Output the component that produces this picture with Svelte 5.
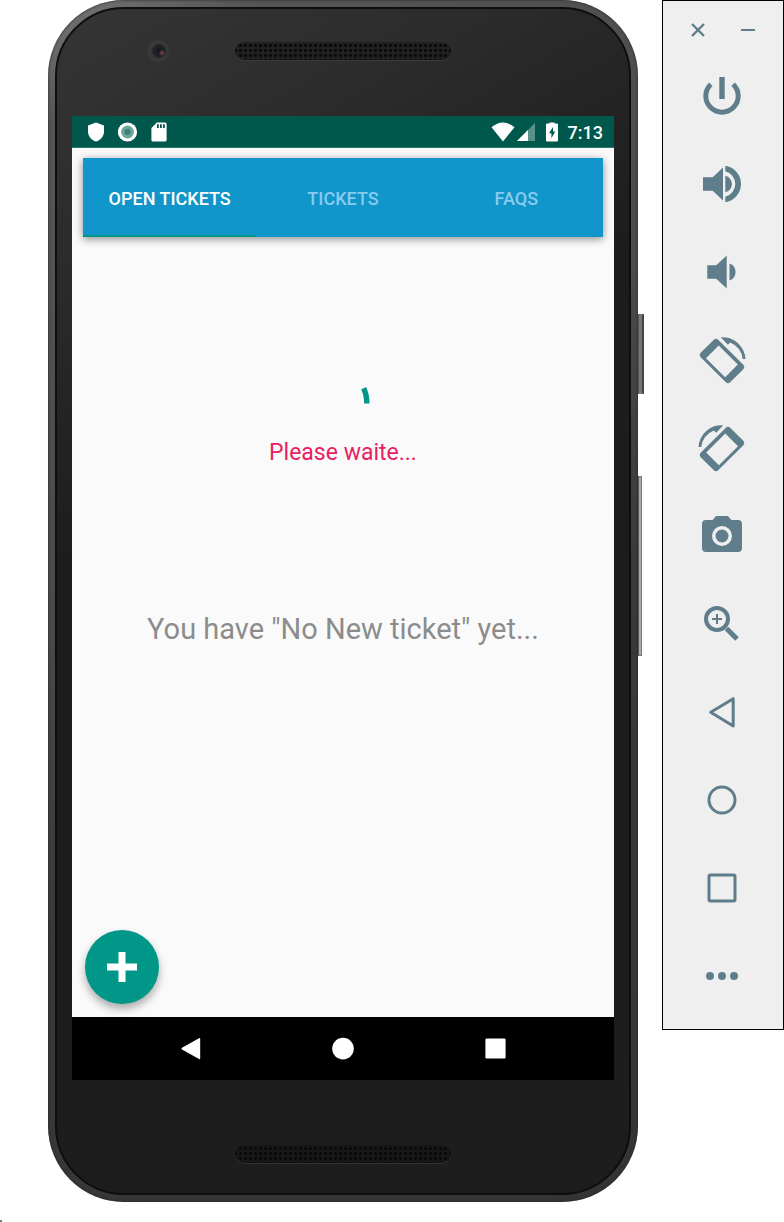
<script>
  const tabs = ['OPEN TICKETS', 'TICKETS', 'FAQS'];
  let active = $state(0);
  const controls = ['Power', 'Volume up', 'Volume down', 'Rotate left', 'Rotate right', 'Take screenshot', 'Zoom', 'Back', 'Home', 'Overview', 'More'];
</script>

{#snippet rotateIcon()}
  <path fill-rule="evenodd" d="M2.9 21.4Q.5 19 2.9 16.6L15.6 3.9Q18 1.5 20.4 3.9L45.1 28.6Q47.5 31 45.1 33.4L32.4 46.1Q30 48.5 27.6 46.1ZM8 22.2L27.1 41.3L39.8 28.6L20.7 9.5Z" />
  <path d="M22.8 1.2A23 23 0 0 1 47.5 23H44.7A20.5 20.5 0 0 0 32.2 6.4L29.8 8.8Z" />
{/snippet}

<div class="page">
  <div class="desk">
    <div class="phone">
      <span class="side power-key"></span>
      <span class="side volume-key"></span>
      <div class="face">
        <div class="bezel top">
          <span class="camera"></span>
          <span class="speaker"></span>
        </div>

        <div class="screen">
          <header class="status">
            <svg class="stat" viewBox="0 0 20 20" aria-hidden="true"><path d="M10 .4L18 3.4V9.5C18 14 14.8 18.2 10 19.6C5.2 18.2 2 14 2 9.5V3.4Z" /></svg>
            <svg class="stat" viewBox="0 0 20 20" aria-hidden="true"><circle cx="9.5" cy="10" r="9.6" /><circle cx="9.5" cy="10" r="6.4" fill="#6fa39b" /><circle cx="9.5" cy="10" r="3" fill="#3d8276" /></svg>
            <svg class="stat" viewBox="0 0 20 20" aria-hidden="true"><path fill-rule="evenodd" d="M6.9.4H15Q16.6.4 16.6 2V18Q16.6 19.6 15 19.6H3Q1.4 19.6 1.4 18V6ZM7 2.2V6H8.8V2.2ZM10 2.2V6H11.8V2.2ZM13 2.2V6H14.8V2.2Z" /></svg>
            <span class="spacer"></span>
            <svg class="wifi" viewBox="0 0 24 20" aria-hidden="true"><path d="M.5 5.2Q12-4.2 23.5 5.2L12 19.6Z" /></svg>
            <svg class="signal" viewBox="0 0 18 20" aria-hidden="true"><path d="M18 1V19H0Z" opacity=".35" /><path d="M11 8V19H0Z" /></svg>
            <svg class="battery" viewBox="0 0 12 20" aria-hidden="true"><path fill-rule="evenodd" d="M3.5.4H8.5V1.6H11Q12 1.6 12 2.6V18.4Q12 19.4 11 19.4H1Q0 19.4 0 18.4V2.6Q0 1.6 1 1.6H3.5ZM7 5L3 11.3H5.4V16.3L9.2 9.6H7Z" /></svg>
            <time>7:13</time>
          </header>

          <main>
            <div class="tabs" role="tablist">
              {#each tabs as tab, i}
                <button role="tab" aria-selected={i === active} class:active={i === active} onclick={() => (active = i)}>{tab}</button>
              {/each}
            </div>
            <div class="loading" role="status">
              <svg viewBox="0 0 72 72" aria-hidden="true"><path d="M56.6 21.2C59 26 59.8 31 59.8 36.6" fill="none" stroke="#009688" stroke-width="5.4" /></svg>
              <p>Please waite...</p>
            </div>
            <p class="empty">You have "No New ticket" yet...</p>
            <button class="fab" aria-label="New ticket">
              <svg viewBox="0 0 30 30" aria-hidden="true"><path d="M11.5 0H18.5V11.5H30V18.5H18.5V30H11.5V18.5H0V11.5H11.5Z" /></svg>
            </button>
          </main>

          <nav>
            <button aria-label="Back"><svg viewBox="0 0 24 24"><path d="M20 1.2Q21.2.6 21.2 2V21.2Q21.2 22.6 20 21.9L3 12.4Q1.8 11.6 3 10.8Z" /></svg></button>
            <button aria-label="Home"><svg viewBox="0 0 24 24"><circle cx="12" cy="11.6" r="10.8" /></svg></button>
            <button aria-label="Overview"><svg viewBox="0 0 24 24"><rect x="2.4" y="1.4" width="20.2" height="20.2" rx="1.4" /></svg></button>
          </nav>
        </div>

        <div class="bezel bottom"><span class="speaker low"></span></div>
      </div>
    </div>

    <aside>
      <div class="window-controls">
        <button aria-label="Close"><svg viewBox="0 0 16 16"><path d="M2 2L14 14M14 2L2 14" fill="none" stroke="currentColor" stroke-width="2.4" /></svg></button>
        <button aria-label="Minimize"><svg viewBox="0 0 16 16"><path d="M1 8H15" fill="none" stroke="currentColor" stroke-width="2" /></svg></button>
      </div>
      {#each controls as name, i}
        <button class="control" aria-label={name}>
          <svg viewBox="0 0 48 48">
            {#if i === 0}
              <path d="M12.9 12.2A16.2 16.2 0 1 0 35.1 12.2" fill="none" stroke="currentColor" stroke-width="5" />
              <rect x="21.3" y="5" width="5.4" height="22" />
            {:else if i === 1}
              <path d="M5 17.3H14.7L25 7.5V40.5L14.7 30.7H5Z" />
              <path d="M27.3 15.7A8.5 8.5 0 0 1 27.3 32.3Z" />
              <path d="M27.3 5.8A18.4 18.4 0 0 1 27.3 42.2V36.8A13.2 13.2 0 0 0 27.3 11.2Z" />
            {:else if i === 2}
              <path d="M9.3 17.3H18.3L28.7 7.5V40.5L18.3 30.7H9.3Z" />
              <path d="M31.5 15.5A9 9 0 0 1 31.5 32.5Z" />
            {:else if i === 3}
              {@render rotateIcon()}
            {:else if i === 4}
              <g transform="matrix(-1 0 0 1 48 0)">{@render rotateIcon()}</g>
            {:else if i === 5}
              <path fill-rule="evenodd" d="M14.7 8L18 4H30L33.3 8H40Q44 8 44 12V36Q44 40 40 40H8Q4 40 4 36V12Q4 8 8 8ZM24 14A10 10 0 1 0 24 34A10 10 0 1 0 24 14Z" />
              <circle cx="24" cy="24" r="6.5" />
            {:else if i === 6}
              <circle cx="19" cy="19" r="11" fill="none" stroke="currentColor" stroke-width="4" />
              <path d="M14 19H24M19 14V24" fill="none" stroke="currentColor" stroke-width="2" />
              <path d="M28.5 28.5L39 39" fill="none" stroke="currentColor" stroke-width="5" />
            {:else if i === 7}
              <path d="M12.7 24.3L35.2 10.7V38Z" fill="none" stroke="currentColor" stroke-width="3" stroke-linejoin="round" />
            {:else if i === 8}
              <circle cx="24" cy="24" r="13" fill="none" stroke="currentColor" stroke-width="3" />
            {:else if i === 9}
              <rect x="11" y="11" width="26" height="26" rx="1.5" fill="none" stroke="currentColor" stroke-width="3" />
            {:else}
              <circle cx="12" cy="24" r="4" /><circle cx="24" cy="24" r="4" /><circle cx="36" cy="24" r="4" />
            {/if}
          </svg>
        </button>
      {/each}
    </aside>
  </div>
  <footer><span></span></footer>
</div>

<style>
  :global(body) { margin: 0; background: #fff; }
  * { box-sizing: border-box; }
  p { margin: 0; }
  svg { display: block; fill: currentColor; }
  button {
    border: 0;
    padding: 0;
    background: none;
    color: inherit;
    font: inherit;
    cursor: pointer;
  }
  .page {
    display: flex;
    flex-direction: column;
    min-height: 100vh;
    font-family: Roboto, "Liberation Sans", sans-serif;
  }
  .desk {
    flex: 1;
    display: grid;
    grid-template-columns: minmax(0, 1fr) 122px;
    gap: 24px;
    padding-left: 48px;
  }
  .phone {
    position: relative;
    display: flex;
    padding: 7px;
    border-radius: 76px;
    background: linear-gradient(150deg, #777 0, #555 8%, #4a4a4a 40%, #3a3838 60%, #353333 100%);
    box-shadow: inset 0 0 2px 1px rgba(40, 40, 40, .5);
  }
  .side {
    position: absolute;
    left: 100%;
    border: 1px solid #777;
    border-left-color: #555;
    background: #777;
  }
  .power-key { top: 314px; width: 6px; height: 80px; border-right: 2px solid #444; }
  .volume-key { top: 476px; width: 4px; height: 180px; background: #aaa; }
  .face {
    flex: 1;
    min-width: 0;
    display: flex;
    flex-direction: column;
    padding: 0 15px;
    border: 2px solid #0e0e0e;
    border-radius: 69px;
    background: linear-gradient(150deg, #353535 0, #2c2c2c 16%, #1c1c1c 38%, #1d1d1d 100%);
  }
  .bezel {
    display: grid;
    grid-template-columns: 1fr 216px 1fr;
    align-items: center;
    justify-items: center;
  }
  .top { height: 107px; padding-bottom: 24px; }
  .bottom { height: 113px; padding-top: 34px; }
  .camera {
    width: 22px;
    height: 22px;
    margin-left: 8px;
    border-radius: 50%;
    background: radial-gradient(circle at 15px 13px, #75494b 0, #4b3338 2px, transparent 3px),
      radial-gradient(circle at 12px 11px, #15171c 0, #23242a 6px, #3a3839 8px);
  }
  .speaker {
    grid-column: 2;
    width: 216px;
    height: 18px;
    border-radius: 9px;
    background: radial-gradient(circle, #050505 0, #090909 1px, transparent 2px) 3px 1px / 5px 5px #202020;
    box-shadow: 0 1px 0 #3a3a3a;
  }
  .low { background-color: #171717; box-shadow: 0 1px 0 #333; }
  .screen { flex: 1; display: flex; flex-direction: column; }
  .status {
    display: flex;
    align-items: center;
    height: 32px;
    padding: 0 11px 0 14px;
    border-bottom: 1px solid #2c7a6e;
    background: #00574b;
    color: #fff;
  }
  .stat { width: 20px; height: 20px; margin-right: 12px; }
  .spacer { flex: 1; }
  .wifi { width: 24px; height: 20px; }
  .signal { width: 18px; height: 20px; margin: 0 11px 0 2px; }
  .battery { width: 12px; height: 20px; margin-right: 10px; }
  time { padding-top: 2px; font-size: 18px; font-weight: 500; line-height: 24px; }
  main {
    flex: 1;
    display: flex;
    flex-direction: column;
    padding: 10px 11px 13px;
    background: #fafafa;
  }
  .tabs {
    display: grid;
    grid-template-columns: repeat(3, 1fr);
    background: #1096ca;
    box-shadow: 0 2px 8px rgba(0, 0, 0, .45);
  }
  .tabs button {
    height: 79px;
    padding-top: 4px;
    border-bottom: 2px solid transparent;
    color: #88cbef;
    font-size: 18px;
    font-weight: 500;
    white-space: nowrap;
  }
  .tabs .active { border-bottom-color: #009688; color: #fff; }
  .loading {
    display: flex;
    flex-direction: column;
    align-items: center;
    margin-top: 130px;
    color: #e91e63;
    font-size: 23px;
    line-height: 28px;
  }
  .loading svg { width: 72px; height: 72px; }
  .empty {
    margin: 144px 0 auto;
    color: #8c8c8c;
    font-size: 29px;
    line-height: 36px;
    text-align: center;
  }
  .fab {
    display: grid;
    place-items: center;
    width: 74px;
    height: 74px;
    margin-left: 2px;
    border-radius: 50%;
    background: #009688;
    box-shadow: 0 5px 9px rgba(0, 0, 0, .32);
    color: #fff;
  }
  .fab svg { width: 30px; height: 30px; }
  nav {
    display: flex;
    justify-content: center;
    align-items: center;
    gap: 104px;
    height: 63px;
    background: #000;
    color: #fff;
  }
  nav button { display: grid; place-items: center; width: 48px; height: 48px; }
  nav svg { width: 24px; height: 24px; }
  aside {
    align-self: start;
    display: flex;
    flex-direction: column;
    padding-bottom: 9px;
    border: 1px solid #000;
    background: #efefef;
    color: #607d8b;
  }
  .window-controls {
    display: flex;
    justify-content: center;
    gap: 26px;
    height: 51px;
    padding-top: 17px;
  }
  .window-controls button { display: grid; place-items: center; width: 24px; height: 24px; }
  .window-controls svg { width: 16px; height: 16px; }
  .control { display: grid; place-items: center; height: 88px; padding-right: 2px; }
  .control svg { width: 48px; height: 48px; overflow: visible; }
  footer { display: flex; align-items: flex-end; height: 20px; }
  footer span { width: 2px; height: 2px; background: #777; }
</style>
